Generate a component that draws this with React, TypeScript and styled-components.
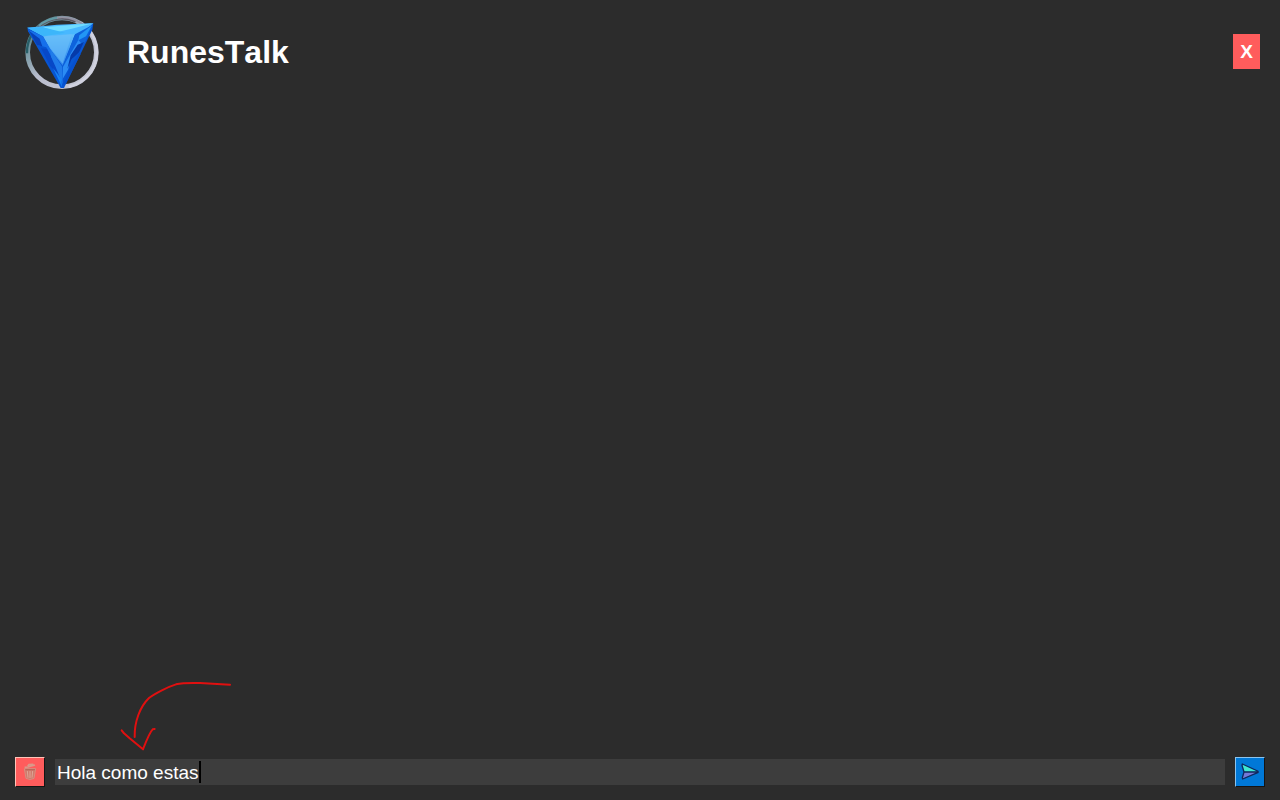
import { useLayoutEffect, useState } from "react";
import styled, { createGlobalStyle } from "styled-components";

const GlobalStyle = createGlobalStyle`
  *, *::before, *::after { box-sizing: border-box; }
  body {
    margin: 0;
    background: #2c2c2c;
    color: #ffffff;
    font-family: "Liberation Sans", Arial, sans-serif;
    font-kerning: none;
  }
`;

const Page = styled.div`
  display: flex;
  flex-direction: column;
  min-height: 100vh;
`;

const Header = styled.header`
  display: flex;
  align-items: center;
  padding: 12px 20px 11px 22px;
`;

const Logo = styled.svg`
  width: 80px;
  height: 80px;
  flex: none;
`;

const Title = styled.h1`
  margin: 0 auto 0 25px;
  font-size: 32px;
  line-height: 36px;
  font-weight: bold;
`;

const CloseButton = styled.button`
  width: 27px;
  height: 35px;
  margin-bottom: 1px;
  padding: 0;
  border: 0;
  background: #ff5c5c;
  color: #ffffff;
  font: bold 19px/35px "Liberation Sans", Arial, sans-serif;
`;

const Messages = styled.main`
  flex: 1;
`;

const Composer = styled.form`
  position: relative;
  display: flex;
  align-items: center;
  gap: 10px;
  padding: 0 15px 13px;
`;

const ToolButton = styled.button<{ $fill: string; $light: string }>`
  display: flex;
  align-items: center;
  justify-content: center;
  flex: none;
  width: 30px;
  height: 30px;
  padding: 0;
  border: 1px solid;
  border-color: ${(p) => p.$light} #141414 #141414 ${(p) => p.$light};
  background: ${(p) => p.$fill};
`;

const Field = styled.div`
  position: relative;
  flex: 1;
  display: flex;
`;

const MessageInput = styled.input`
  width: 100%;
  height: 26px;
  padding: 2px 2px 0;
  border: 0;
  outline: 0;
  background: #3d3d3d;
  color: #ffffff;
  caret-color: transparent;
  font: 19px/24px "Liberation Sans", Arial, sans-serif;
  font-kerning: none;
`;

const Caret = styled.span`
  position: absolute;
  top: 2px;
  width: 2px;
  height: 22px;
  background: #000000;
  pointer-events: none;
`;

const Arrow = styled.svg`
  position: absolute;
  left: 105px;
  bottom: 40px;
  width: 140px;
  height: 90px;
  pointer-events: none;
`;

function GemLogo() {
  return (
    <Logo viewBox="21 21 240 240" aria-hidden="true">
      <defs>
        <linearGradient id="ring" x1="0" y1="0" x2="1" y2="1">
          <stop offset="0" stopColor="#2e6470" />
          <stop offset=".22" stopColor="#6f939d" />
          <stop offset=".5" stopColor="#b9bdcd" />
          <stop offset="1" stopColor="#c9cbd8" />
        </linearGradient>
        <linearGradient id="face" x1="0" y1="0" x2="0" y2="1">
          <stop offset="0" stopColor="#62c0fa" />
          <stop offset="1" stopColor="#2b83ee" />
        </linearGradient>
      </defs>
      <circle cx="141" cy="142" r="103" fill="none" stroke="url(#ring)" strokeWidth="14" />
      <path d="M58 80A101 101 0 0 1 182 50" fill="none" stroke="#5b5964" strokeWidth="7" />
      <path d="M72 62A106 106 0 0 1 129 38" fill="none" stroke="#629aa5" strokeWidth="6" />
      <path d="M126 38A105 105 0 0 1 210 64" fill="none" stroke="#9292a2" strokeWidth="6" />
      <path d="M216 69A105 105 0 0 1 161 245" fill="none" stroke="#d1d2df" strokeWidth="8" />
      <path d="M36 145A105 105 0 0 1 54 83" fill="none" stroke="#285e67" strokeWidth="7" />
      <path d="M37 68L235 55L232 74L147 249L137 249L39 79Z" fill="#0755d3" />
      <path d="M37 68L126 59L235 55L193 91L84 94Z" fill="#48b8ff" />
      <path d="M83 67L157 61L235 55L176 70L128 81Z" fill="#70dcff" />
      <path d="M37 68L83 67L150 83L84 94Z" fill="#3cb6fa" />
      <path d="M84 94L180 88L143 182L105 132Z" fill="url(#face)" />
      <path d="M84 94L171 87L143 176L108 132Z" fill="#6abef8" opacity=".6" />
      <path d="M42 75L84 94L105 132L124 164L111 160L94 127L67 120Z" fill="#1670eb" />
      <path d="M42 77L74 101L82 124L66 120Z" fill="#0740b7" />
      <path d="M78 130L96 132L112 162L125 171L132 209L106 184Z" fill="#0748c7" />
      <path d="M106 132L142 185L143 238L121 184L108 155Z" fill="#207bea" />
      <path d="M180 88L232 60L214 105L194 132L162 177L143 187Z" fill="#0e63dc" />
      <path d="M193 91L231 61L213 94L190 106Z" fill="#2296f4" />
      <path d="M190 105L200 116L165 162L160 193L143 222L144 186Z" fill="#2b8cf4" />
      <path d="M188 119L207 111L192 142L170 163L157 191L167 151Z" fill="#053aa9" />
      <path d="M192 144L197 147L151 238L144 239L163 193Z" fill="#0550ce" />
      <path d="M114 189L139 222L141 246Z" fill="#1683f4" />
    </Logo>
  );
}

function TrashIcon() {
  return (
    <svg width="28" height="28" viewBox="3 3 84 84" fill="none" aria-hidden="true">
      <path d="M29 36H61L57 64Q45 71 33 64Z" fill="#cf7a6c" />
      <path d="M29 31L39 30L60 24M38 28L42 23L53 22L55 27" stroke="#d99a8a" strokeWidth="5" />
      <path d="M28 35H62L57 64Q45 71 33 64Z" stroke="#d58f80" strokeWidth="3" />
      <path d="M37 42L39 62M45 42V63M53 42L51 62" stroke="#dea696" strokeWidth="3" />
      <path d="M31 38H60" stroke="#b56758" strokeWidth="3" />
    </svg>
  );
}

function SendIcon() {
  return (
    <svg width="28" height="28" viewBox="18 18 84 84" strokeLinejoin="round" aria-hidden="true">
      <path d="M37 36L84 59H42Z" fill="#3fe8cf" />
      <path d="M42 60H84L38 80Z" fill="#7378d8" />
      <path d="M37 36L83 57Q86 60 83 62L38 81L37 77L42 60L36 40ZM42 60H83" fill="none" stroke="#10285c" strokeWidth="4" />
    </svg>
  );
}

export default function App() {
  const [message, setMessage] = useState("Hola como estas");
  const [caretLeft, setCaretLeft] = useState(0);

  useLayoutEffect(() => {
    const ctx = document.createElement("canvas").getContext("2d");
    if (!ctx) return;
    ctx.font = '19px "Liberation Sans", Arial, sans-serif';
    setCaretLeft(Math.round(ctx.measureText(message).width) + 2);
  }, [message]);

  return (
    <Page>
      <GlobalStyle />
      <Header>
        <GemLogo />
        <Title>RunesTalk</Title>
        <CloseButton type="button" aria-label="Cerrar">X</CloseButton>
      </Header>
      <Messages />
      <Composer onSubmit={(e) => e.preventDefault()}>
        <ToolButton type="button" aria-label="Borrar" $fill="#ff5c5c" $light="#ffc4b8">
          <TrashIcon />
        </ToolButton>
        <Field>
          <MessageInput
            aria-label="Mensaje"
            value={message}
            onChange={(e) => setMessage(e.target.value)}
          />
          <Caret style={{ left: caretLeft }} />
        </Field>
        <ToolButton type="submit" aria-label="Enviar" $fill="#0078d7" $light="#8cc4ee">
          <SendIcon />
        </ToolButton>
        <Arrow viewBox="0 0 420 270" fill="none" stroke="#e01010" strokeWidth="6" strokeLinecap="round" strokeLinejoin="round" aria-hidden="true">
          <path d="M375 44L285 39C250 38 230 39 213 43C190 50 150 70 132 84C105 110 88 155 89 201" />
          <path d="M50 181L57 190L74 205L114 238C121 220 133 188 143 178L149 177" />
        </Arrow>
      </Composer>
    </Page>
  );
}
